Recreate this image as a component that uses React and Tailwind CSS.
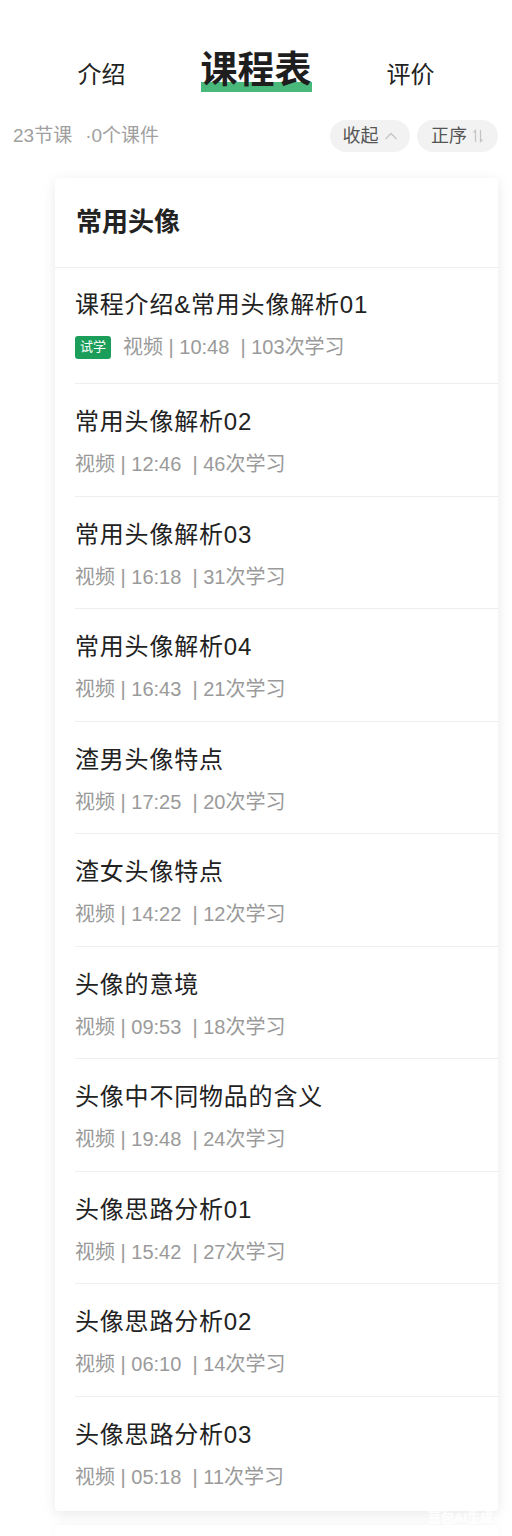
import React from "react";

const lessons = [
  { title: "课程介绍&常用头像解析01", time: "10:48", count: "103", trial: true },
  { title: "常用头像解析02", time: "12:46", count: "46" },
  { title: "常用头像解析03", time: "16:18", count: "31" },
  { title: "常用头像解析04", time: "16:43", count: "21" },
  { title: "渣男头像特点", time: "17:25", count: "20" },
  { title: "渣女头像特点", time: "14:22", count: "12" },
  { title: "头像的意境", time: "09:53", count: "18" },
  { title: "头像中不同物品的含义", time: "19:48", count: "24" },
  { title: "头像思路分析01", time: "15:42", count: "27" },
  { title: "头像思路分析02", time: "06:10", count: "14" },
  { title: "头像思路分析03", time: "05:18", count: "11" },
];

const font = { fontFamily: '"Liberation Sans", "Noto Sans CJK SC", sans-serif' };

function ChevronUp() {
  return (
    <svg width="14" height="10" viewBox="0 0 14 10" fill="none" stroke="#c4c4c4" strokeWidth="1.3">
      <path d="M1.5 8 L7 2.5 L12.5 8" />
    </svg>
  );
}

function SortIcon() {
  return (
    <svg width="12" height="14" viewBox="0 0 12 14" fill="none" stroke="#c4c4c4" strokeWidth="1.3">
      <path d="M3.5 13 V1.5 L1.5 3.5" />
      <path d="M8.5 1 V12.5 L10.5 10.5" />
    </svg>
  );
}

function LessonRow({ lesson, first, last }) {
  return (
    <div
      className={`ml-[20px] flex flex-col ${first ? "h-[116px] pt-[23px]" : "h-[112.5px] pt-[24px]"} ${last ? "" : "border-b border-[#eeeeee]"}`}
    >
      <div className="text-[24px] leading-[28px] tracking-[0.8px] text-[#222222]">{lesson.title}</div>
      <div className="mt-[16px] flex h-[24px] items-center">
        {lesson.trial && (
          <span className="mr-[12px] flex h-[23px] w-[36px] items-center justify-center rounded-[3px] bg-[#1b9e5a] text-[13px] text-white">
            试学
          </span>
        )}
        <span className="whitespace-pre text-[20px] leading-[24px] text-[#9a9a9a]">
          视频 | {lesson.time}  | {lesson.count}次学习
        </span>
      </div>
    </div>
  );
}

export default function App() {
  return (
    <div className="relative min-h-[1536px] w-[512px] overflow-hidden bg-white" style={font}>
      {/* tabs */}
      <div className="flex items-end justify-center gap-[75px] pt-[46px]">
        <span className="mb-[3px] text-[24px] leading-[36px] text-[#222222]">介绍</span>
        <span className="relative">
          <span className="absolute bottom-[4px] left-0 right-0 h-[10px] bg-[#48b97b]" />
          <span className="relative text-[37px] font-bold leading-[50px] text-[#1e1e1e]">课程表</span>
        </span>
        <span className="mb-[3px] text-[24px] leading-[36px] text-[#222222]">评价</span>
      </div>

      {/* meta row */}
      <div className="mt-[24px] flex items-center justify-between pl-[13px] pr-[14px]">
        <span className="text-[19px] text-[#a0a0a0]">
          23节课<span className="ml-[13px]">·0个课件</span>
        </span>
        <div className="flex gap-[7px]">
          <span className="flex h-[32px] w-[80px] items-center justify-center gap-[5px] rounded-full bg-[#f2f2f2] text-[18px] text-[#555555]">
            收起
            <ChevronUp />
          </span>
          <span className="flex h-[32px] w-[81px] items-center justify-center gap-[5px] rounded-full bg-[#f2f2f2] text-[18px] text-[#555555]">
            正序
            <SortIcon />
          </span>
        </div>
      </div>

      {/* card */}
      <div className="ml-[55px] mt-[26px] w-[443px] rounded-[4px] bg-white shadow-[0_3px_14px_rgba(0,0,0,0.09)]">
        <div className="flex h-[90px] items-center border-b border-[#eeeeee] pl-[21px]">
          <span className="text-[26px] font-bold text-[#222222]">常用头像</span>
        </div>
        <div className="pb-[2px]">
          {lessons.map((l, i) => (
            <LessonRow key={l.title} lesson={l} first={i === 0} last={i === lessons.length - 1} />
          ))}
        </div>
      </div>

      <div className="ml-[55px] mt-[14px] h-[20px] w-[443px] rounded-t-[4px] bg-white shadow-[0_-2px_8px_rgba(0,0,0,0.03)]" />

      <span className="absolute left-[428px] top-[1508px] text-[13px] font-bold text-white/90">豆包AI生成</span>
    </div>
  );
}
